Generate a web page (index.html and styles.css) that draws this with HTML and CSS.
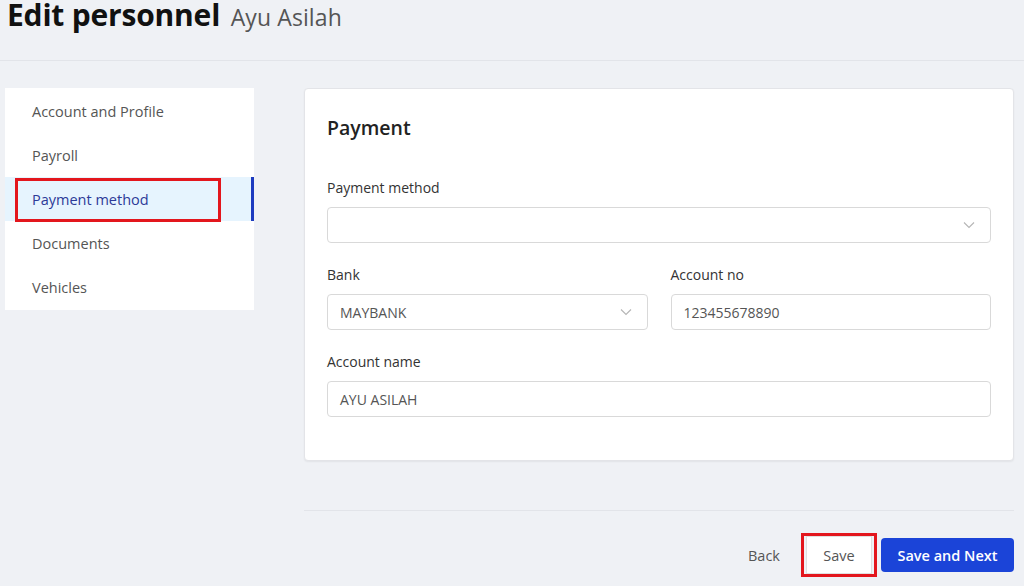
FILE: index.html
```html
<!DOCTYPE html>
<html>
<head>
<meta charset="utf-8">
<link rel="stylesheet" href="styles.css">
</head>
<body>
<header class="page-header">
  <h1 class="title">Edit personnel <span class="subtitle">Ayu Asilah</span></h1>
</header>
<div class="content">
  <nav class="sidenav">
    <a class="nav-item">Account and Profile</a>
    <a class="nav-item">Payroll</a>
    <a class="nav-item active"><span class="highlight">Payment method</span></a>
    <a class="nav-item">Documents</a>
    <a class="nav-item">Vehicles</a>
  </nav>
  <div class="main">
    <section class="card">
      <h2 class="card-title">Payment</h2>
      <div class="field">
        <label class="label">Payment method</label>
        <div class="control select"><span class="value"></span>
          <svg class="chev" width="12" height="8" viewBox="0 0 12 8"><path d="M1 1.5 L6 6.5 L11 1.5" fill="none" stroke="#b5b5b5" stroke-width="1.1"/></svg>
        </div>
      </div>
      <div class="row">
        <div class="field">
          <label class="label">Bank</label>
          <div class="control select"><span class="value">MAYBANK</span>
            <svg class="chev" width="12" height="8" viewBox="0 0 12 8"><path d="M1 1.5 L6 6.5 L11 1.5" fill="none" stroke="#b5b5b5" stroke-width="1.1"/></svg>
          </div>
        </div>
        <div class="field">
          <label class="label">Account no</label>
          <div class="control"><span class="value">123455678890</span></div>
        </div>
      </div>
      <div class="field">
        <label class="label">Account name</label>
        <div class="control"><span class="value">AYU ASILAH</span></div>
      </div>
    </section>
    <footer class="actions">
      <button class="btn btn-link">Back</button>
      <span class="save-wrap"><button class="btn btn-default">Save</button></span>
      <button class="btn btn-primary">Save and Next</button>
    </footer>
  </div>
</div>
</body>
</html>
```
FILE: styles.css
```css
* { box-sizing: border-box; }
html, body {
  margin: 0;
  padding: 0;
  background: #eff1f5;
  font-family: "Open Sans", "Noto Sans", sans-serif;
  color: #333;
  width: 1024px;
  height: 586px;
  overflow: hidden;
}
.page-header {
  display: flex;
  align-items: flex-start;
  height: 61px;
  border-bottom: 1px solid #e2e4e9;
  padding-left: 7px;
}
.title {
  margin: 0;
  font-size: 30px;
  font-weight: 700;
  color: #111;
  line-height: 30px;
  letter-spacing: -0.2px;
}
.subtitle {
  font-size: 23px;
  font-weight: 400;
  color: #555;
  margin-left: 3px;
  letter-spacing: 0.1px;
}
.content {
  display: flex;
  padding-top: 27px;
  padding-left: 5px;
  gap: 50px;
}
.sidenav {
  width: 249px;
  height: 222px;
  padding-top: 1px;
  background: #fff;
  display: flex;
  flex-direction: column;
}
.nav-item {
  height: 44px;
  flex: none;
  display: flex;
  align-items: center;
  padding-left: 27px;
  font-size: 14.5px;
  color: #555;
  position: relative;
}
.nav-item.active {
  background: #e6f4fe;
  color: #2c3a98;
  border-right: 3px solid #1d3bbf;
}
.highlight {
  position: relative;
}
.highlight::before {
  content: "";
  position: absolute;
  left: -17px;
  right: -72px;
  top: -12px;
  bottom: -13px;
  border: 3px solid #e3161d;
}
.main {
  width: 710px;
}
.card {
  background: #fff;
  border: 1px solid #e3e4e8;
  border-radius: 4px;
  height: 373px;
  padding: 22px 22px;
  box-shadow: 0 1px 2px rgba(0,0,0,0.06);
}
.card-title {
  margin: 4px 0 37px;
  font-size: 19.5px;
  font-weight: 600;
  color: #222;
  line-height: 26px;
}
.field {
  flex: 1;
  margin-bottom: 22px;
}
.label {
  display: block;
  font-size: 14px;
  color: #333;
  line-height: 20px;
  margin-bottom: 9px;
}
.row {
  display: flex;
  gap: 23px;
}
.control {
  height: 36px;
  border: 1px solid #d9d9d9;
  border-radius: 4px;
  display: flex;
  align-items: center;
  padding: 0 12px;
  font-size: 14px;
  color: #555;
  background: #fff;
}
.select .value { flex: 1; }
.chev { margin-right: 3px; }
.actions {
  margin-top: 49px;
  border-top: 1px solid #e2e4e9;
  display: flex;
  justify-content: flex-end;
  align-items: center;
  padding-top: 22px;
  gap: 10px;
}
.btn {
  font-family: inherit;
  font-size: 14.5px;
  height: 34px;
  border-radius: 4px;
  cursor: pointer;
}
.btn-link {
  background: transparent;
  border: none;
  color: #555;
  padding: 0 8px;
  margin-right: 3px;
}
.save-wrap {
  border: 3px solid #e3161d;
  padding: 0 2px;
  height: 44px;
  display: flex;
  align-items: center;
}
.btn-default {
  background: #fff;
  border: 1px solid #e0e0e0;
  color: #555;
  width: 66px;
  height: 38px;
  border-radius: 0;
}
.btn-primary {
  background: #1b44d8;
  border: none;
  color: #fff;
  font-weight: 600;
  width: 133px;
  margin-left: -6px;
}
```
